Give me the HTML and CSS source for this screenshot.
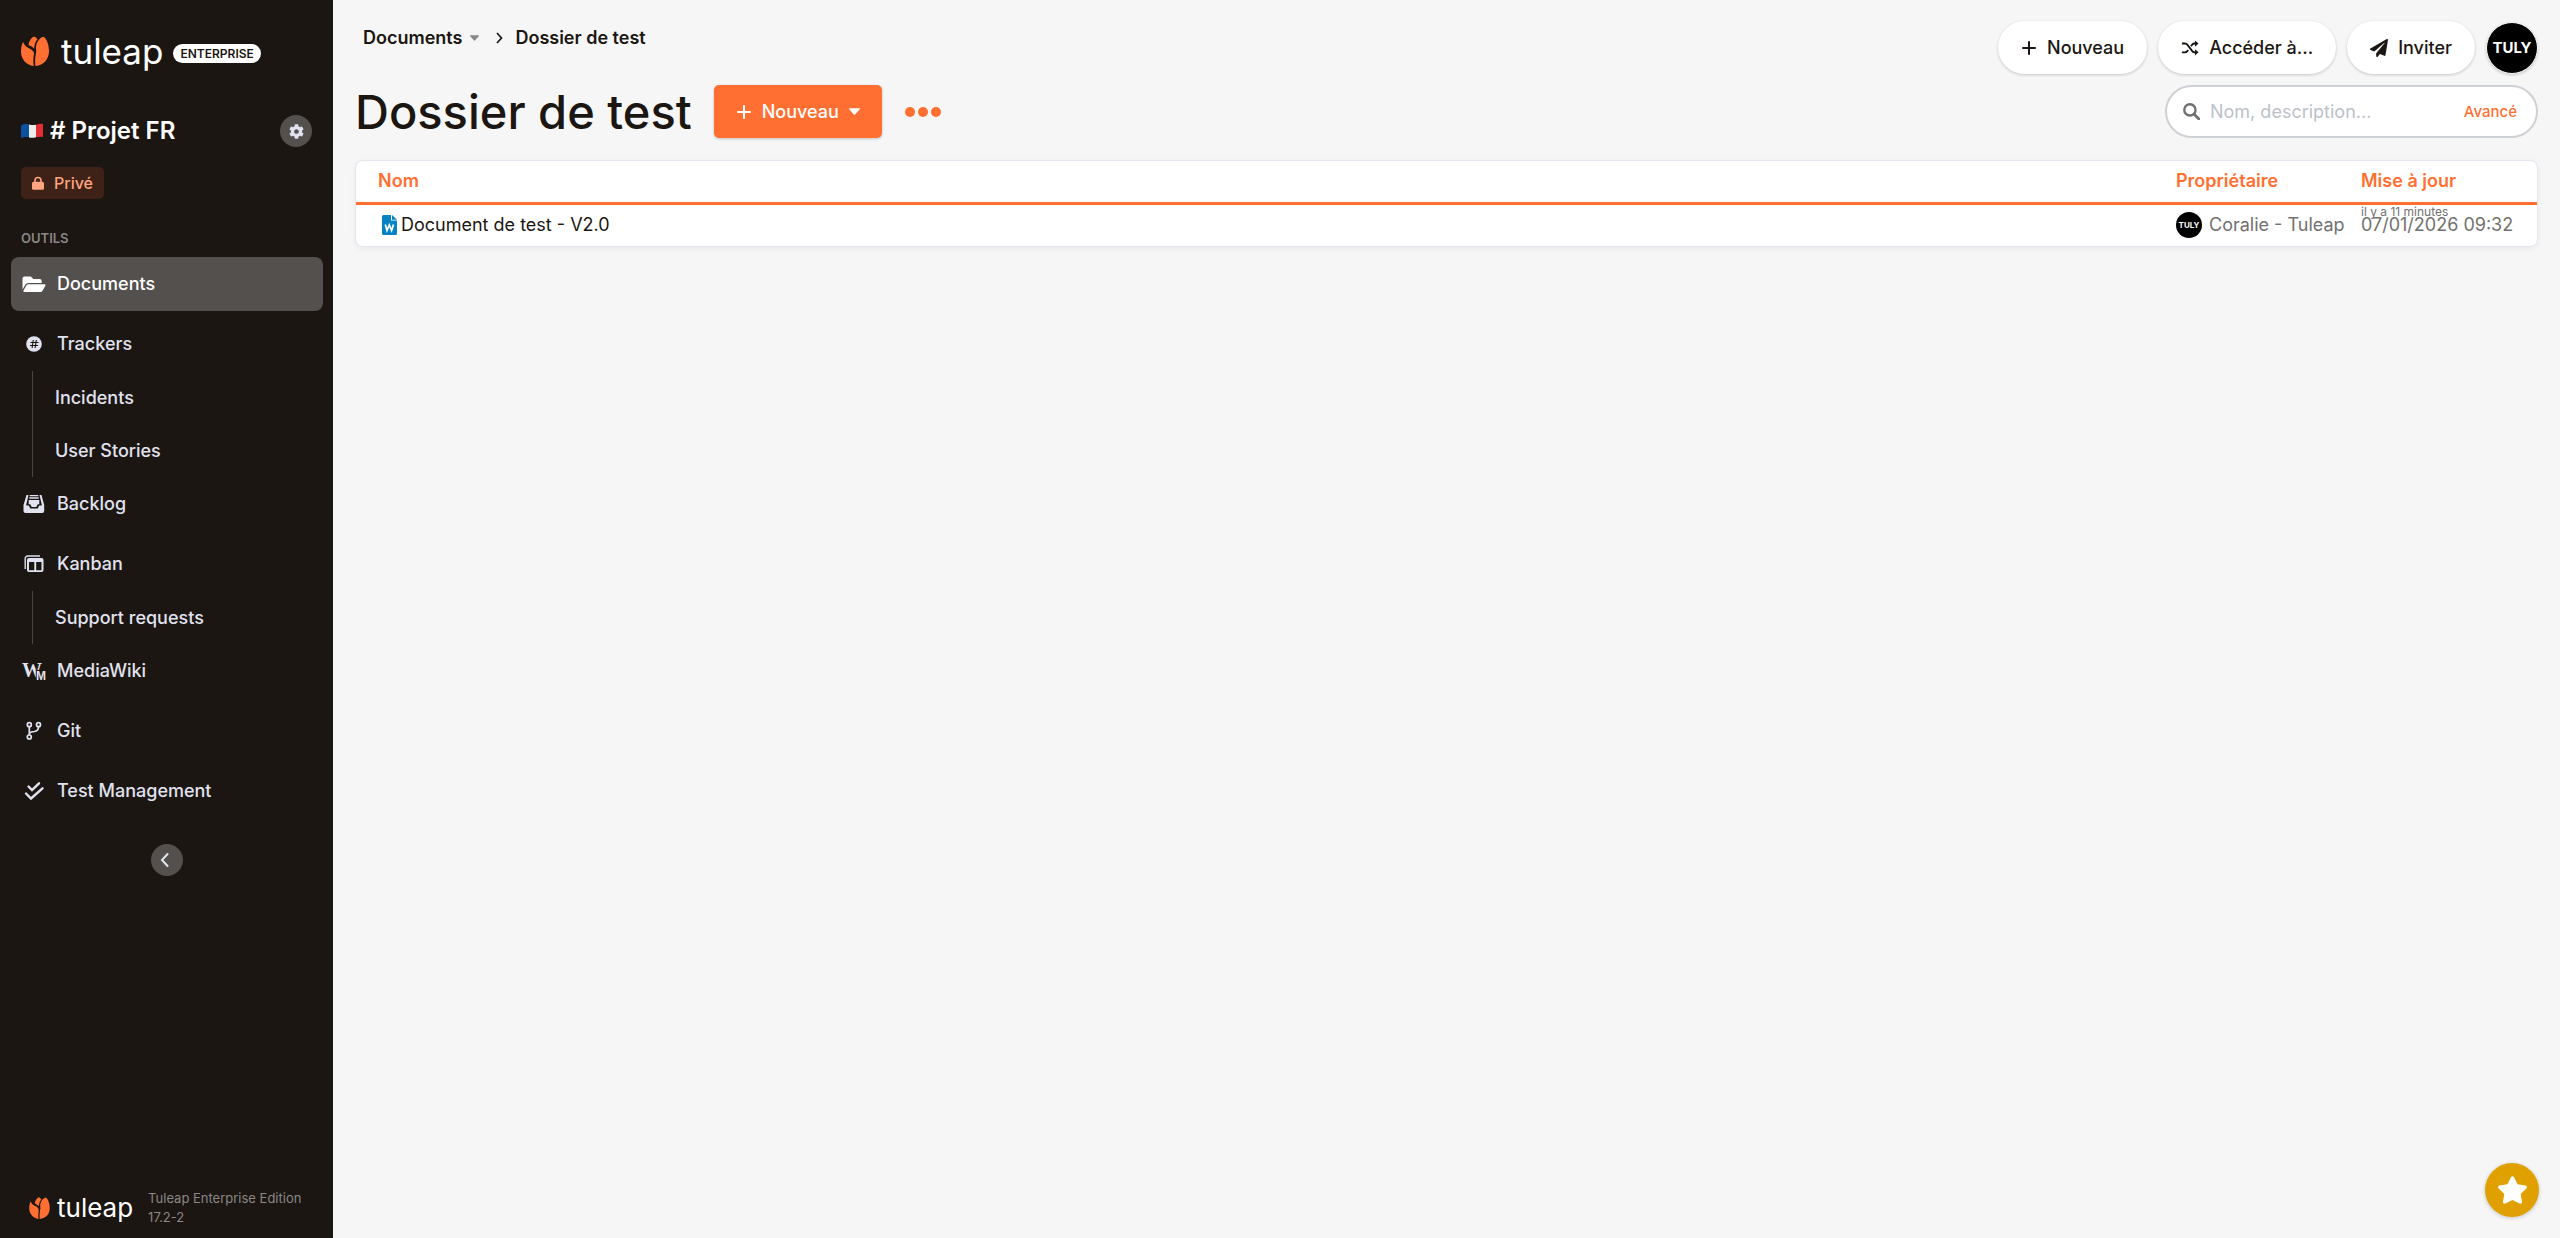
FILE: index.html
```html
<!DOCTYPE html>
<html lang="fr">
<head>
<meta charset="utf-8">
<title>Dossier de test</title>
<link rel="stylesheet" href="styles.css">
</head>
<body>
<svg class="sprite" aria-hidden="true">
  <symbol id="tulip" viewBox="0 0 28 30">
    <path d="M22.500 .8C25.500 2 28 9 28 15c0 8-5 14.200-13.600 15-.4-4-.4-7 .2-10.500.5-3 .9-4 .4-6.500-.5-5 3-11.400 7.500-12.200z"/>
    <path d="M7.500 9C8 5 10 1.800 13 .4c1.500.5 2.600 1.500 3.500 2.900C14.200 6 13.200 9 13.200 12.700 12 11.200 9.500 9.700 7.500 9z"/>
    <path d="M2 6c1.500 3 3 4.700 5.400 6C10.500 13.500 13.200 15 13 18c-.8 4-.8 8-.3 12C5 29 0 23 0 15.500 0 12 .5 9 2 6z"/>
  </symbol>
  <symbol id="plus" viewBox="0 0 16 16"><path d="M8 2v12M2 8h12" fill="none" stroke="currentColor" stroke-width="2" stroke-linecap="round"/></symbol>
  <symbol id="caret" viewBox="0 0 10 6"><path d="M.6 0h8.800c.5 0 .8.6.4 1L5.500 5.700c-.3.3-.7.3-1 0L.2 1C-.2.6.1 0 .6 0z"/></symbol>
</svg>
<div class="layout">
  <aside class="sidebar">
    <a class="brand" href="#">
      <svg class="brand-mark"><use href="#tulip"/></svg>
      <span class="brand-name">tuleap</span>
      <span class="brand-badge">ENTERPRISE</span>
    </a>
    <div class="project">
      <svg class="flag" viewBox="0 0 22 16" role="img" aria-label="France"><path fill="#0c51a0" d="M0 2.500C2.500 1 5 .8 8 1.500v13c-3-.7-5.500-.5-8 1z"/><path fill="#eee" d="M8 1.500c2.500.5 4.500.8 7 .2v12.600c-2.500.7-4.500.7-7 .2z"/><path fill="#e03035" d="M15 1.700C17.500 1 20 .5 22 1v13c-2.500-.5-4.500-.2-7 .3z"/></svg>
      <a class="project-name" href="#"># Projet FR</a>
      <button class="round" aria-label="Administration"><svg class="gear" viewBox="0 0 512 512"><path d="M487.400 315.700l-42.600-24.600c4.300-23.200 4.300-47 0-70.200l42.600-24.600c4.900-2.800 7.100-8.600 5.500-14-11.100-35.600-30-67.800-54.700-94.600-3.800-4.100-10-5.100-14.800-2.300L380.800 110c-17.900-15.400-38.500-27.300-60.800-35.100V25.800c0-5.600-3.900-10.500-9.400-11.700-36.700-8.200-74.300-7.800-109.200 0-5.500 1.200-9.400 6.100-9.400 11.700V75c-22.200 7.900-42.800 19.800-60.800 35.100L88.700 85.500c-4.900-2.800-11-1.900-14.800 2.300-24.700 26.700-43.600 58.900-54.700 94.600-1.700 5.400.6 11.200 5.500 14L67.300 221c-4.300 23.200-4.300 47 0 70.200l-42.600 24.600c-4.900 2.800-7.100 8.600-5.500 14 11.100 35.600 30 67.800 54.700 94.600 3.800 4.100 10 5.100 14.800 2.300l42.600-24.600c17.900 15.400 38.500 27.300 60.800 35.100v49.200c0 5.600 3.900 10.500 9.400 11.700 36.700 8.200 74.300 7.800 109.200 0 5.500-1.200 9.400-6.100 9.400-11.700v-49.200c22.200-7.900 42.800-19.800 60.800-35.100l42.600 24.600c4.900 2.800 11 1.900 14.800-2.300 24.700-26.700 43.600-58.900 54.700-94.600 1.500-5.500-.7-11.300-5.600-14.100zM256 336c-44.100 0-80-35.900-80-80s35.900-80 80-80 80 35.900 80 80-35.900 80-80 80z"/></svg></button>
    </div>
    <span class="privacy"><svg class="lock" viewBox="0 0 12 14"><path d="M3 7V4.500a3 3 0 0 1 6 0V7" fill="none" stroke="currentColor" stroke-width="1.600"/><rect y="5.800" width="12" height="8" rx="1.500"/></svg>Privé</span>
    <h2 class="nav-title">OUTILS</h2>
    <nav class="nav">
      <a class="nav-item active" href="#"><svg class="nav-icon" viewBox="0 0 24 24"><path transform="translate(.5 2) scale(.04)" d="M572.700 292.100L500.300 416.200A64 64 0 0 1 445 448H45c-18.500 0-30-20.100-20.700-36.100l72.400-124.100A64 64 0 0 1 152 256h400c18.500 0 30 20.100 20.700 36.100zM152 224h328v-48c0-26.500-21.500-48-48-48H272l-64-64H48C21.500 64 0 85.500 0 112v278l69.100-118.400C86.200 242.200 118 224 152 224z"/></svg>Documents</a>
      <a class="nav-item" href="#"><svg class="nav-icon" viewBox="0 0 24 24"><circle cx="12" cy="12" r="7.800"/><path d="M11.300 8l-1.200 8M14.300 8l-1.200 8M8.500 10.500h8M8 13.500h8" fill="none" stroke="#1b1612" stroke-width="1.100"/></svg>Trackers</a>
      <div class="subnav"><a href="#">Incidents</a><a href="#">User Stories</a></div>
      <a class="nav-item" href="#"><svg class="nav-icon" viewBox="0 0 24 24"><path d="M4.500 3h2L4.300 12.500v1h2.500l1.500 3h7.400l1.500-3h2.500v-1L17.500 3h2l2.700 10v6a2 2 0 0 1-2 2H3.500a2 2 0 0 1-2-2v-6z"/><path d="M7.700 3h8.600v1.200H7.700zM7.300 5.200h9.400v1.500H7.300zM6.700 8h10.600v4.200h-1.500L14.300 15H9.700l-1.500-2.800H6.700z"/></svg>Backlog</a>
      <a class="nav-item" href="#"><svg class="nav-icon" viewBox="0 0 24 24"><path d="M3.200 17V6.500a2.500 2.500 0 0 1 2.500-2.500H18" fill="none" stroke="currentColor" stroke-width="1.400"/><path fill-rule="evenodd" d="M7 6h12.500a2 2 0 0 1 2 2v10a2 2 0 0 1-2 2H7a2 2 0 0 1-2-2V8a2 2 0 0 1 2-2zm0 4v8.300h5.300V10zm7.200 0v8.300h5.300V10z"/></svg>Kanban</a>
      <div class="subnav"><a href="#">Support requests</a></div>
      <a class="nav-item" href="#"><svg class="nav-icon wiki" viewBox="0 0 24 24"><text class="wiki-w" x="0" y="18">W</text><text class="wiki-m" x="14" y="21">M</text></svg>MediaWiki</a>
      <a class="nav-item" href="#"><svg class="nav-icon" viewBox="0 0 24 24"><g fill="none" stroke="currentColor" stroke-width="1.700"><circle cx="7.300" cy="5.700" r="2"/><circle cx="16.500" cy="5.700" r="2"/><circle cx="7.300" cy="18" r="2"/><path d="M7.300 8v8M16.500 8c0 3-1 4-4 4.500-3 .3-4.500.8-5.200 2"/></g></svg>Git</a>
      <a class="nav-item" href="#"><svg class="nav-icon" viewBox="0 0 24 24"><path d="M6.500 7.500L10 11l7-6.700M4 14.500l5 5L20.500 9.300" fill="none" stroke="currentColor" stroke-width="2.400" stroke-linecap="round"/></svg>Test Management</a>
    </nav>
    <button class="round collapse" aria-label="Réduire"><svg class="chevron" viewBox="0 0 10 14"><path d="M7.500 1L2 7l5.500 6" fill="none" stroke="currentColor" stroke-width="2" stroke-linecap="round"/></svg></button>
    <footer class="side-footer">
      <svg class="foot-mark"><use href="#tulip"/></svg>
      <span class="foot-name">tuleap</span>
      <span class="version">Tuleap Enterprise Edition<br>17.2-2</span>
    </footer>
  </aside>
  <main class="main">
    <header class="topbar">
      <nav class="breadcrumb">
        <a href="#">Documents</a>
        <svg class="crumb-caret"><use href="#caret"/></svg>
        <svg class="crumb-sep" viewBox="0 0 8 12"><path d="M2 1l4.500 5L2 11" fill="none" stroke="currentColor" stroke-width="1.700"/></svg>
        <a href="#">Dossier de test</a>
      </nav>
      <div class="actions">
        <button class="pill"><svg class="icon"><use href="#plus"/></svg>Nouveau</button>
        <button class="pill"><svg class="icon-wide" viewBox="0 0 20 18"><path d="M1 4h3.300c1.200 0 2 .4 2.700 1.300l5.500 7.200c.7.900 1.400 1.300 2.600 1.300H17M1 13.800h3.300c1.200 0 2-.4 2.700-1.300l1-1.300M11 7l1.500-1.800c.7-.9 1.400-1.200 2.600-1.200H17" fill="none" stroke="currentColor" stroke-width="2"/><path d="M15.500 .6L19.500 4l-4 3.500zM15.500 10.400l4 3.400-4 3.600z"/></svg>Accéder à...</button>
        <button class="pill"><svg class="icon-wide" viewBox="0 0 512 512"><path d="M476 3.200L12.500 270.600c-18.100 10.400-15.800 35.600 2.200 43.200L121 358.400l287.300-253.200c5.500-4.900 13.300 2.600 8.600 8.300L176 407v80.500c0 23.600 28.500 32.900 42.500 15.800L282 426l124.600 52.200c14.200 6 30.400-2.900 33-18.200l72-432C515 7.800 493.300-6.800 476 3.200z"/></svg>Inviter</button>
        <button class="avatar">TULY</button>
      </div>
    </header>
    <div class="heading">
      <h1>Dossier de test</h1>
      <button class="primary"><svg class="icon"><use href="#plus"/></svg>Nouveau<svg class="btn-caret"><use href="#caret"/></svg></button>
      <button class="more" aria-label="Plus d'actions"><i></i><i></i><i></i></button>
      <form class="search">
        <svg class="search-icon" viewBox="0 0 16 16"><path d="M10.500 10.500L15 15" stroke="currentColor" stroke-width="2.600" stroke-linecap="round"/><circle cx="6.500" cy="6.500" r="5.300" fill="none" stroke="currentColor" stroke-width="2.200"/></svg>
        <input type="text" placeholder="Nom, description..." aria-label="Rechercher">
        <a href="#">Avancé</a>
      </form>
    </div>
    <div class="card">
      <table>
        <thead><tr><th>Nom</th><th class="owner">Propriétaire</th><th class="date">Mise à jour</th></tr></thead>
        <tbody><tr>
          <td><a class="doc" href="#"><svg class="word" viewBox="0 0 15 20"><path fill="#0683c4" d="M1.500 0H9v5.500h6v13a1.500 1.500 0 0 1-1.500 1.500h-12A1.500 1.500 0 0 1 0 18.500v-17A1.500 1.500 0 0 1 1.500 0zM10 0l5 4.700h-5z"/><path d="M3.300 9.500l1.700 6 2.300-5.500 2.300 5.500 1.900-6" fill="none" stroke="#fff" stroke-width="1.700"/></svg>Document de test - V2.0</a></td>
          <td class="owner"><span class="user"><span class="mini-avatar">TULY</span>Coralie - Tuleap</span></td>
          <td class="date"><span class="stamp"><small>il y a 11 minutes</small>07/01/2026 09:32</span></td>
        </tr></tbody>
      </table>
    </div>
  </main>
</div>
<button class="star" aria-label="Nouveautés"><svg viewBox="0 0 576 512"><path d="M259.300 17.800L194 150.200 47.900 171.500c-26.200 3.800-36.700 36.100-17.700 54.600l105.700 103-25 145.500c-4.500 26.300 23.200 46 46.400 33.700L288 439.600l130.700 68.700c23.200 12.200 50.900-7.400 46.400-33.700l-25-145.500 105.700-103c19-18.500 8.500-50.800-17.700-54.600L382 150.200 316.700 17.800c-11.700-23.600-45.600-23.900-57.400 0z"/></svg></button>
</body>
</html>
```
FILE: styles.css
```css
* { box-sizing: border-box; }
body { margin: 0; background: #f6f6f6; color: #1b1612; font: 18px/24px Inter, "Liberation Sans", sans-serif; }
a { color: inherit; text-decoration: none; }
button { font: inherit; color: inherit; border: 0; margin: 0; cursor: pointer; }
svg { fill: currentColor; flex: none; display: block; }
.sprite { position: absolute; width: 0; height: 0; }
.layout { display: flex; min-height: 100vh; }

.sidebar { width: 333px; flex: none; display: flex; flex-direction: column; background: #1b1612; color: #e1e2ef; }
.brand { display: flex; align-items: center; height: 36px; margin: 33px 21px 0; color: #fff; }
.brand-mark { width: 28px; height: 30px; color: #ff6f31; }
.brand-name { margin-left: 12px; font-size: 35px; line-height: 36px; }
.brand-badge { margin: 4px 0 0 10px; padding: 0 7px; border-radius: 10px; background: #fff; color: #1b1612; font-size: 12px; font-weight: 600; line-height: 19px; }
.project { display: flex; align-items: center; height: 32px; margin: 46px 21px 0; color: #fff; }
.flag { width: 22px; height: 16px; }
.project-name { margin-left: 7px; font-size: 24px; font-weight: 600; }
.round { display: flex; align-items: center; justify-content: center; width: 32px; height: 32px; margin-left: auto; padding: 0; border-radius: 50%; background: #54504d; color: #e1e2ef; }
.gear { width: 15px; height: 15px; }
.privacy { display: flex; align-items: center; align-self: flex-start; height: 32px; margin: 20px 21px 0; padding: 0 11px; gap: 10px; border-radius: 5px; background: #3e2218; color: #ffa580; font-size: 16px; font-weight: 500; }
.lock { width: 12px; height: 14px; }
.nav-title { margin: 27px 21px 7px; color: #8a8785; font-size: 13px; line-height: 24px; font-weight: 600; }
.nav { display: flex; flex-direction: column; margin: 0 10px 0 11px; font-weight: 500; }
.nav-item { display: flex; align-items: center; height: 54px; padding: 0 11px; gap: 11px; border-radius: 8px; }
.nav-item + .nav-item { margin-top: 6px; }
.nav-item.active { background: #54504d; color: #fff; }
.nav-icon { width: 24px; height: 24px; }
.wiki { overflow: visible; }
.wiki-w { font: bold 20px "Liberation Serif", serif; }
.wiki-m { font: bold 12px "Liberation Sans", sans-serif; stroke: #1b1612; stroke-width: 2px; paint-order: stroke; }
.subnav { margin-left: 21px; border-left: 1px solid #494542; }
.subnav a { display: block; padding-left: 22px; line-height: 53px; }
.collapse { margin: 26px auto 24px; }
.chevron { width: 10px; height: 14px; margin-right: 4px; }
.side-footer { display: flex; align-items: center; margin: auto 0 11px 29px; color: #fff; }
.foot-mark { width: 21px; height: 22px; color: #ff6f31; }
.foot-name { margin-left: 7px; font-size: 26px; line-height: 30px; }
.version { margin-left: 15px; color: #8a8785; font-size: 13px; line-height: 19px; }

.main { flex: 1; min-width: 0; padding: 21px 22px; }
.topbar { display: flex; justify-content: space-between; align-items: flex-start; }
.breadcrumb { display: flex; align-items: center; padding: 5px 8px; font-weight: 600; }
.crumb-caret { width: 9px; height: 6px; margin-left: 8px; color: #8a8785; }
.crumb-sep { width: 8px; height: 12px; margin: 0 12px 0 16px; }
.actions { display: flex; align-items: center; gap: 11px; }
.pill { display: flex; align-items: center; gap: 10px; height: 53px; padding: 0 23px; border-radius: 27px; background: #fff; font-weight: 500; box-shadow: 0 1px 3px #0003; }
.icon { width: 16px; height: 16px; }
.icon-wide { width: 18px; height: 18px; }
.avatar { width: 52px; height: 52px; padding: 0; border: 1px solid #fff; border-radius: 50%; background: #000; color: #fff; font-size: 15px; font-weight: 700; box-shadow: 0 1px 3px #0003; }

.heading { display: flex; align-items: center; height: 53px; margin: 11px 0 22px; }
h1 { margin: 0; font-size: 47px; line-height: 53px; font-weight: 500; }
.primary { display: flex; align-items: center; height: 53px; margin-left: 22px; padding: 0 22px; gap: 10px; border-radius: 5px; background: #ff6f31; color: #fff; font-weight: 500; box-shadow: 0 1px 3px #0003; }
.btn-caret { width: 11px; height: 7px; }
.more { display: flex; gap: 3px; padding: 0; margin-left: 23px; background: none; }
.more i { width: 10px; height: 10px; border-radius: 50%; background: #ff6f31; }
.search { display: flex; align-items: center; width: 373px; height: 53px; margin-left: auto; padding: 0 19px 0 16px; border: 2px solid #cdd1d6; border-radius: 27px; background: #fff; }
.search-icon { width: 17px; height: 17px; color: #6f6f6f; }
.search input { flex: 1; min-width: 0; margin: 0 10px; padding: 0; border: 0; outline: 0; background: none; font: inherit; }
.search input::placeholder { color: #bcc1c9; }
.search a { color: #ff6f31; font-size: 15px; font-weight: 500; }

.card { border: 1px solid #e4e6f1; border-radius: 8px; background: #fff; box-shadow: 0 2px 6px #0000000d; }
table { width: 100%; border-collapse: collapse; table-layout: fixed; }
th, td { padding: 0 0 0 22px; text-align: left; }
th { height: 42px; border-bottom: 3px solid #ff6f31; color: #ff6f31; font-weight: 600; }
td { height: 43px; color: #727170; }
.owner { width: 185px; padding-left: 0; }
.date { width: 176px; padding-left: 0; }
.doc { display: flex; align-items: center; gap: 4px; padding-left: 4px; color: #1b1612; }
.word { width: 15px; height: 20px; }
.user { display: flex; align-items: center; gap: 7px; white-space: nowrap; }
.mini-avatar { width: 26px; height: 26px; border-radius: 50%; background: #000; color: #fff; font-size: 8px; line-height: 26px; font-weight: 700; text-align: center; }
.stamp { position: relative; display: block; white-space: nowrap; }
.stamp small { position: absolute; top: -10px; left: 0; font-size: 12px; line-height: 18px; }
.star { position: fixed; right: 21px; bottom: 21px; display: flex; align-items: center; justify-content: center; width: 54px; height: 54px; padding: 0; border-radius: 50%; background: #e0a000; color: #fff; box-shadow: 0 1px 4px #0003; }
.star svg { width: 31px; height: 28px; }
```
